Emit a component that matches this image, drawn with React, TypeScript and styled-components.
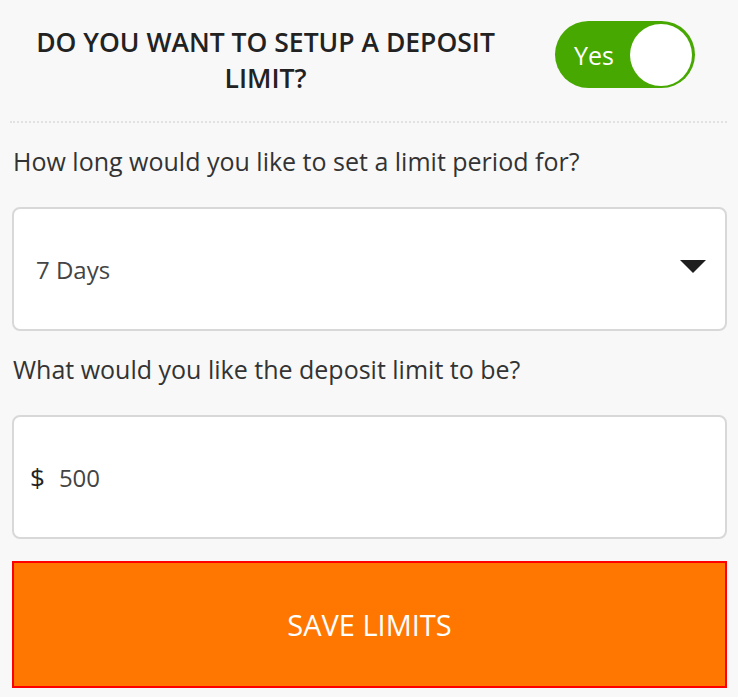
import React from "react";
import styled, { createGlobalStyle } from "styled-components";

const GlobalStyle = createGlobalStyle`
  html, body {
    margin: 0;
    padding: 0;
    background: #f8f8f8;
  }
  body {
    font-family: "Open Sans", "Liberation Sans", sans-serif;
    color: #333;
  }
`;

const Page = styled.div`
  display: flex;
  flex-direction: column;
  padding: 0 11px 0 12px;
`;

const Header = styled.div`
  display: flex;
  align-items: flex-start;
  justify-content: space-between;
  padding: 21px 32px 0 8px;
  height: 123px;
  box-sizing: border-box;
  border-bottom: 2px dotted #e2e2e2;
  margin: 0 0 0 -2px;
`;

const Question = styled.h1`
  margin: 3px 0 0;
  width: 495px;
  font-size: 26.5px;
  line-height: 36px;
  font-weight: 600;
  text-align: center;
  color: #222;
`;

const Toggle = styled.div`
  display: flex;
  align-items: center;
  justify-content: space-between;
  width: 140px;
  height: 67px;
  box-sizing: border-box;
  padding: 0 3px 0 19px;
  border-radius: 34px;
  background: #46a800;
  color: #fff;
  font-size: 25px;
`;

const Knob = styled.div`
  width: 62px;
  height: 62px;
  border-radius: 50%;
  background: #fff;
`;

const Label = styled.p`
  margin: 0;
  padding: 20px 1px 0;
  height: 84px;
  box-sizing: border-box;
  font-size: 25px;
  line-height: 36px;
  color: #333;
`;

const Field = styled.div`
  display: flex;
  align-items: center;
  height: 124px;
  box-sizing: border-box;
  padding: 0 19px 0 ${(p: { $pad: number }) => p.$pad}px;
  background: #fff;
  border: 2px solid #d8d8d8;
  border-radius: 8px;
  font-size: 24px;
  color: #444;
`;

const Value = styled.span`
  flex: 1;
`;

const Currency = styled.span`
  font-size: 26px;
  color: #222;
  margin-right: 14px;
`;

const Arrow = styled.span`
  width: 0;
  height: 0;
  border-left: 13px solid transparent;
  border-right: 13px solid transparent;
  border-top: 13px solid #1e1e1e;
  margin-top: -6px;
`;

const SaveButton = styled.button`
  margin-top: 22px;
  height: 127px;
  width: 100%;
  border: 2px solid #ff0000;
  background: #ff7700;
  color: #fff;
  font-family: "Open Sans", "Liberation Sans", sans-serif;
  font-size: 29px;
  cursor: pointer;
`;

export default function App() {
  return (
    <>
      <GlobalStyle />
      <Page>
        <Header>
          <Question>DO YOU WANT TO SETUP A DEPOSIT LIMIT?</Question>
          <Toggle>
            Yes
            <Knob />
          </Toggle>
        </Header>
        <Label>How long would you like to set a limit period for?</Label>
        <Field $pad={22}>
          <Value>7 Days</Value>
          <Arrow />
        </Field>
        <Label>What would you like the deposit limit to be?</Label>
        <Field $pad={16}>
          <Currency>$</Currency>
          <Value>500</Value>
        </Field>
        <SaveButton>SAVE LIMITS</SaveButton>
      </Page>
    </>
  );
}
